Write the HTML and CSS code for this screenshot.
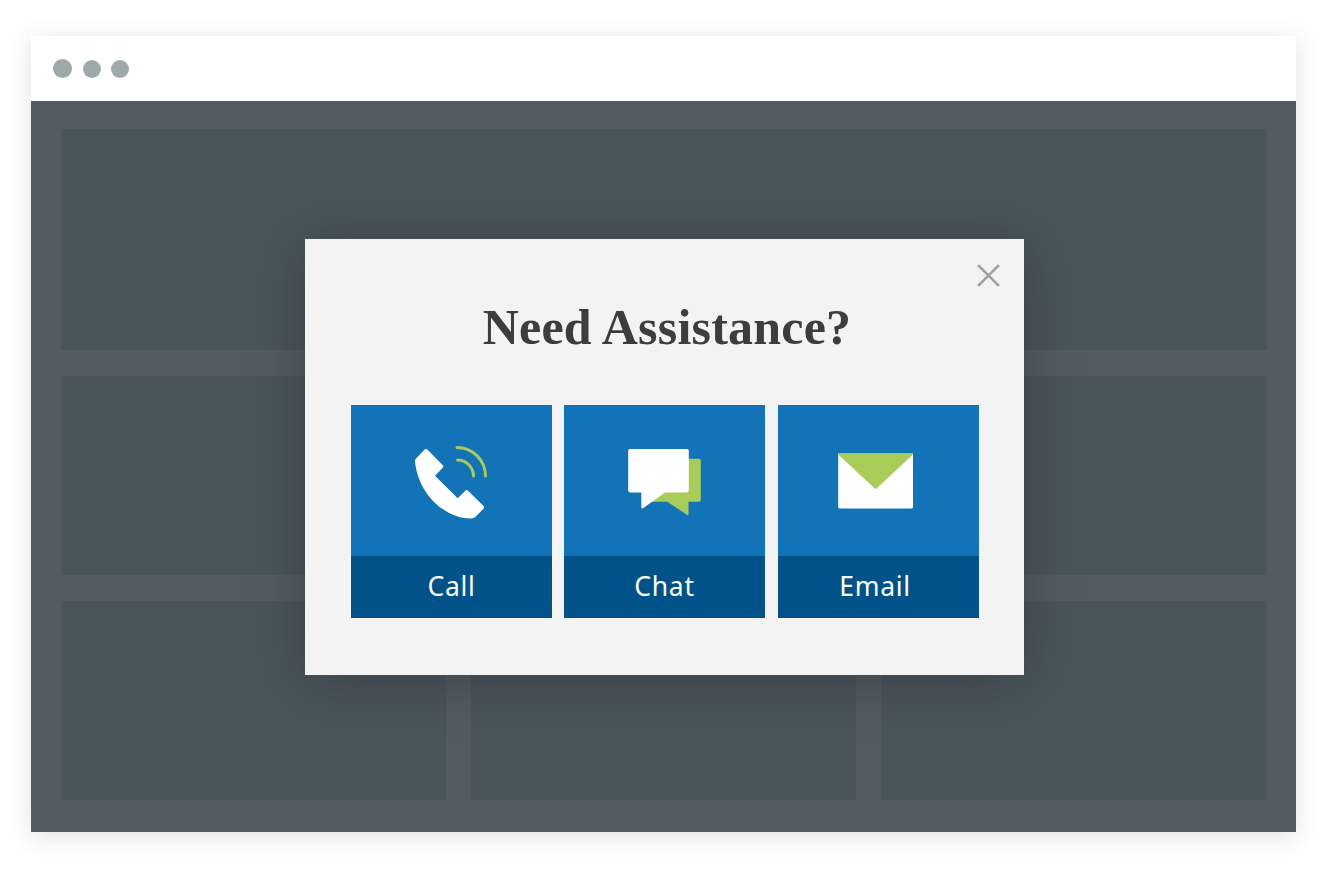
FILE: index.html
```html
<!DOCTYPE html>
<html lang="en">
<head>
<meta charset="utf-8">
<title>Need Assistance?</title>
<link rel="stylesheet" href="styles.css">
</head>
<body>
<div class="window">
  <header class="chrome">
    <span class="dot"></span><span class="dot"></span><span class="dot"></span>
  </header>
  <main class="content">
    <div class="card card-wide"></div>
    <div class="card"></div><div class="card"></div><div class="card"></div>
    <div class="card"></div><div class="card"></div><div class="card"></div>
    <section class="modal">
      <svg class="close" viewBox="0 0 24 24" aria-label="Close"><path d="M2 2 L22 22 M22 2 L2 22"/></svg>
      <h1 class="title">Need Assistance?</h1>
      <div class="tiles">
        <a class="tile">
          <div class="tile-icon">
            <svg viewBox="351 405 201 151">
              <path class="white" d="M424.6 449.6 Q426 448.6 427.4 449.6 L443 465.4 Q443.6 466.6 443 467.6 L435 475.7 L457.7 498.3 L465.6 490.4 Q466.7 489.6 467.8 490.4 L483.8 506.2 Q484.6 507.4 483.8 508.4 L475 517.2 Q473.4 518.6 470 518.6 C447 518 419 497 415 462 Q414.8 460 415.6 459 Z"/>
              <path class="arc" d="M457 447.5 A28.5 28.5 0 0 1 485.5 476"/>
              <path class="arc" d="M457.5 460 A16 16 0 0 1 473.5 476"/>
            </svg>
          </div>
          <div class="tile-label">Call</div>
        </a>
        <a class="tile">
          <div class="tile-icon">
            <svg viewBox="564 405 201 151">
              <path class="green" d="M680 458.7 H699 Q700.8 458.7 700.8 460.5 V500 Q700.8 501.8 699 501.8 H688.5 V514.6 Q688.3 515.4 687.3 515 L667.3 501.8 H650 L665 488 Z"/>
              <path class="white" d="M630 449 H687 Q688.8 449 688.8 450.8 V490.6 Q688.8 492.4 687 492.4 H665 L643 508.2 Q641.4 508.8 641.3 507.4 V492.4 H630 Q628.2 492.4 628.2 490.6 V450.8 Q628.2 449 630 449 Z"/>
            </svg>
          </div>
          <div class="tile-label">Chat</div>
        </a>
        <a class="tile">
          <div class="tile-icon">
            <svg viewBox="778 405 201 151">
              <path class="white" d="M838.2 453.4 H913 V507 Q913 508.4 911.6 508.4 H839.6 Q838.2 508.4 838.2 507 Z"/>
              <path class="green" d="M838.2 453.4 H913 V454.6 L875.6 489.2 L838.2 454.6 Z"/>
            </svg>
          </div>
          <div class="tile-label tile-label-email">Email</div>
        </a>
      </div>
    </section>
  </main>
</div>
</body>
</html>
```
FILE: styles.css
```css
* { box-sizing: border-box; }
html, body { margin: 0; height: 100%; background: #fff; }
body { padding: 36px 34px 38px 31px; overflow: hidden; }

.window {
  height: 796px;
  display: flex;
  flex-direction: column;
  box-shadow: 0 4px 22px rgba(60, 70, 80, 0.16);
}
.chrome {
  height: 65px;
  flex: none;
  background: #fff;
  display: flex;
  align-items: center;
  padding: 0 0 0 22px;
  gap: 10px;
}
.dot {
  width: 18px;
  height: 18px;
  border-radius: 50%;
  background: #9eaaa9;
}
.dot:first-child { width: 19px; height: 19px; margin-right: 1px; }

.content {
  position: relative;
  flex: 1;
  background: #535c62;
  display: grid;
  grid-template-columns: 385px 385px 386px;
  grid-template-rows: 221px 199px 199px;
  gap: 26px 25px;
  padding: 28px 29px 32px 30px;
}
.card { background: #4a555b; }
.card-wide { grid-column: 1 / -1; }

.modal {
  position: absolute;
  left: 274px;
  top: 138px;
  width: 719px;
  height: 436px;
  background: #f3f3f3;
  box-shadow: 0 6px 50px rgba(30, 36, 40, 0.4);
  padding: 0 45px 0 46px;
}
.close {
  position: absolute;
  top: 24px;
  right: 23px;
  width: 25px;
  height: 25px;
  fill: none;
  stroke: #a0a0a0;
  stroke-width: 2.6;
}
.title {
  margin: 0;
  padding: 59px 0 0 4px;
  height: 166px;
  text-align: center;
  font: bold 50px/58px "Liberation Serif", serif;
  letter-spacing: 0.2px;
  color: #3d3d3d;
}
.tiles {
  display: flex;
  gap: 12px;
}
.tile {
  width: 201px;
  display: block;
}
.tile:last-child { margin-left: 1px; }
.tile-icon {
  height: 151px;
  background: #1273b9;
}
.tile-icon svg {
  display: block;
  width: 201px;
  height: 151px;
}
.white { fill: #fff; }
.green { fill: #a9cb57; }
.arc {
  fill: none;
  stroke: #a9cb57;
  stroke-width: 3;
  stroke-linecap: round;
}
.tile-label {
  height: 62px;
  background: #005288;
  color: #fff;
  text-align: center;
  font: 400 26.5px/60px "Noto Sans", sans-serif;
  letter-spacing: 0.7px;
}
.tile-label-email { padding-right: 7px; }
```
